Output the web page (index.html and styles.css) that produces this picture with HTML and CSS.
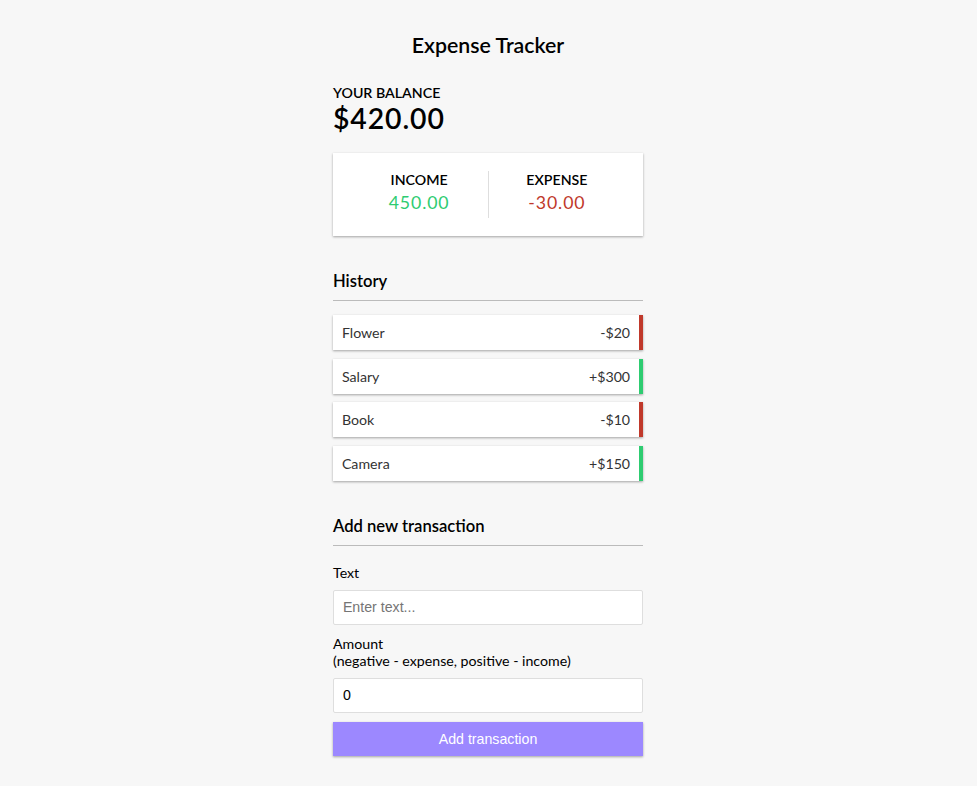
FILE: index.html
```html
<!DOCTYPE html>
<html lang="en">
<head>
<meta charset="UTF-8">
<title>Expense Tracker</title>
<link rel="stylesheet" href="styles.css">
</head>
<body>
  <div class="container">
    <h2 class="title">Expense Tracker</h2>
    <h4 class="caption">Your Balance</h4>
    <h1 class="balance">$420.00</h1>

    <div class="inc-exp">
      <div class="inc-exp-col">
        <h4 class="caption">Income</h4>
        <p class="money plus">450.00</p>
      </div>
      <div class="inc-exp-col">
        <h4 class="caption">Expense</h4>
        <p class="money minus">-30.00</p>
      </div>
    </div>

    <h3 class="section-title">History</h3>
    <ul class="list">
      <li class="item minus"><span>Flower</span><span>-$20</span></li>
      <li class="item plus"><span>Salary</span><span>+$300</span></li>
      <li class="item minus"><span>Book</span><span>-$10</span></li>
      <li class="item plus"><span>Camera</span><span>+$150</span></li>
    </ul>

    <h3 class="section-title">Add new transaction</h3>
    <form class="form">
      <div class="form-control">
        <label class="label" for="text">Text</label>
        <input class="field" type="text" id="text" placeholder="Enter text...">
      </div>
      <div class="form-control">
        <label class="label label-wide" for="amount">Amount <br>(negative - expense, positive - income)</label>
        <input class="field" type="number" id="amount" value="0" placeholder="Enter amount...">
      </div>
      <button class="btn" type="button">Add transaction</button>
    </form>
  </div>
</body>
</html>
```

FILE: styles.css
```css
* {
  box-sizing: border-box;
}

body {
  margin: 0;
  padding-right: 1px;
  background-color: #f7f7f7;
  font-family: "Lato", "Open Sans", sans-serif;
  color: #000;
}

.container {
  width: 310px;
  margin: 0 auto;
  padding: 32px 0 26px;
}

.title {
  margin: 0 0 25.5px;
  font-size: 21.3px;
  line-height: 26px;
  text-align: center;
  font-weight: 600;
}

.caption {
  margin: 0;
  font-size: 14.2px;
  line-height: 17px;
  text-transform: uppercase;
  font-weight: 600;
}

.balance {
  margin: 0;
  font-size: 28.4px;
  line-height: 34px;
  letter-spacing: 0.9px;
  font-weight: 600;
}

.inc-exp {
  display: flex;
  justify-content: space-between;
  margin: 18.7px 0 17.7px;
  padding: 17.7px;
  background-color: #fff;
  box-shadow: 0 1px 3px rgba(0, 0, 0, 0.12), 0 1px 2px rgba(0, 0, 0, 0.24);
}

.inc-exp-col {
  flex: 1;
  text-align: center;
}

.inc-exp-col:first-of-type {
  border-right: 1px solid #dedede;
}

.money {
  margin: 4.4px 0;
  font-size: 17.7px;
  line-height: 21.3px;
  letter-spacing: 0.9px;
}

.money.plus {
  color: #2ecc71;
}

.money.minus {
  color: #c0392b;
}

.section-title {
  margin: 35.4px 0 8.9px;
  padding-bottom: 8.9px;
  border-bottom: 1px solid #bbb;
  font-size: 16.6px;
  line-height: 20px;
  font-weight: 600;
}

.list {
  list-style: none;
  padding: 0;
  margin: 14.2px 0 35.4px;
}

.item {
  display: flex;
  justify-content: space-between;
  margin: 8.9px 0;
  padding: 8.9px;
  background-color: #fff;
  color: #333;
  font-size: 14.2px;
  line-height: 17px;
  box-shadow: 0 1px 3px rgba(0, 0, 0, 0.12), 0 1px 2px rgba(0, 0, 0, 0.24);
}

.item.plus {
  border-right: 4.4px solid #2ecc71;
}

.item.minus {
  border-right: 4.4px solid #c0392b;
}

.label {
  display: inline-block;
  margin: 8.9px 0;
  font-size: 14.2px;
  line-height: 17px;
}

.label-wide {
  margin: 9.9px 0;
}

.field {
  display: block;
  width: 100%;
  margin: 0;
  padding: 8.9px;
  border: 1px solid #dedede;
  border-radius: 2px;
  background: #fff;
  font-family: "Liberation Sans", Arial, sans-serif;
  font-size: 14.2px;
  line-height: 15px;
  color: #000;
}

.field::placeholder {
  color: #757575;
}

.btn {
  display: block;
  width: 100%;
  margin: 8.9px 0 0;
  padding: 8.9px;
  border: 0;
  background-color: #9c88ff;
  color: #fff;
  font-family: "Liberation Sans", Arial, sans-serif;
  font-size: 14.2px;
  line-height: 16px;
  box-shadow: 0 1px 3px rgba(0, 0, 0, 0.12), 0 1px 2px rgba(0, 0, 0, 0.24);
  cursor: pointer;
}
```
